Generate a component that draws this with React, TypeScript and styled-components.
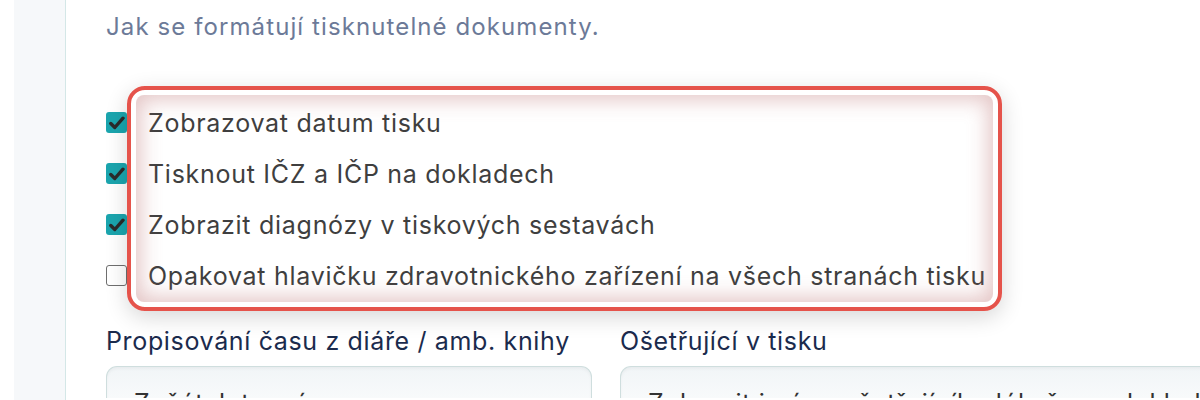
import React from "react";
import styled, { createGlobalStyle } from "styled-components";

const Global = createGlobalStyle`
  html, body { margin: 0; padding: 0; background: #ffffff; overflow: hidden; }
  body { font-family: "Inter", "Liberation Sans", sans-serif; }
  * { box-sizing: border-box; }
`;

const Page = styled.div`
  display: flex;
  width: 1200px;
  height: 400px;
  overflow: hidden;
  background: #ffffff;
`;

const Gutter = styled.div`
  width: 14px;
  flex: none;
  background: #ffffff;
`;

const Sidebar = styled.div`
  width: 52px;
  flex: none;
  background: #f6f8fa;
  border-right: 1px solid #d4e7e7;
`;

const Content = styled.div`
  flex: 1;
  padding: 10px 0 0 40px;
  min-width: 0;
`;

const Description = styled.p`
  margin: 0;
  font-size: 24px;
  line-height: 34px;
  color: #6c7a98;
  letter-spacing: 1.1px;
`;

const ListWrap = styled.div`
  position: relative;
  margin-top: 53px;
  width: 896px;
`;

const Row = styled.label`
  display: flex;
  align-items: center;
  gap: 21px;
  height: 51px;
`;

const Box = styled.span<{ $checked: boolean }>`
  width: 21px;
  height: 21px;
  flex: none;
  border-radius: 3px;
  display: flex;
  align-items: center;
  justify-content: center;
  background: ${(p) => (p.$checked ? "#1ba5ae" : "#ffffff")};
  border: ${(p) => (p.$checked ? "none" : "1.5px solid #6f6f6f")};
`;

const Label = styled.span`
  font-size: 25px;
  letter-spacing: 0.72px;
  color: #3f3f3f;
  white-space: nowrap;
`;

const Highlight = styled.div`
  position: absolute;
  left: 21px;
  top: -11px;
  width: 875px;
  height: 225px;
  border: 4px solid #e5534b;
  border-radius: 18px;
  padding: 5px;
  pointer-events: none;
  box-shadow: 0 6px 22px rgba(0, 0, 0, 0.16);
`;

const HighlightInner = styled.div`
  width: 100%;
  height: 100%;
  border-radius: 8px;
  box-shadow: inset 0 0 20px 5px rgba(190, 120, 120, 0.42);
`;

const Fields = styled.div`
  display: grid;
  grid-template-columns: 486px 620px;
  column-gap: 28px;
  margin-top: 24px;
`;

const Field = styled.div`
  display: flex;
  flex-direction: column;
`;

const FieldLabel = styled.div`
  font-size: 25px;
  letter-spacing: 0.65px;
  line-height: 32px;
  color: #1b2b4d;
  white-space: nowrap;
`;

const Select = styled.div`
  margin-top: 9px;
  height: 32px;
  border: 1px solid #cfdede;
  border-bottom: none;
  border-radius: 11px 11px 0 0;
  background: linear-gradient(#f1f5f7, #f8fafb);
  box-shadow: inset 0 2px 3px rgba(0, 0, 0, 0.04);
  padding: 0 0 0 27px;
  white-space: nowrap;
  overflow: hidden;
`;

const SelectText = styled.div`
  margin-top: 21px;
  font-size: 25px;
  line-height: 30px;
  letter-spacing: 0.7px;
  color: #333333;
`;

const Check = () => (
  <svg width="16" height="14" viewBox="0 0 16 14">
    <path
      d="M1.8 7.5 L5.8 11.5 L14 2.2"
      fill="none"
      stroke="#2b2b2b"
      strokeWidth="3.4"
      strokeLinecap="round"
      strokeLinejoin="round"
    />
  </svg>
);

const items = [
  { text: "Zobrazovat datum tisku", checked: true },
  { text: "Tisknout IČZ a IČP na dokladech", checked: true },
  { text: "Zobrazit diagnózy v tiskových sestavách", checked: true },
  { text: "Opakovat hlavičku zdravotnického zařízení na všech stranách tisku", checked: false },
];

export default function App() {
  return (
    <>
      <Global />
      <Page>
        <Gutter />
        <Sidebar />
        <Content>
          <Description>Jak se formátují tisknutelné dokumenty.</Description>
          <ListWrap>
            {items.map((it) => (
              <Row key={it.text}>
                <Box $checked={it.checked}>{it.checked && <Check />}</Box>
                <Label>{it.text}</Label>
              </Row>
            ))}
            <Highlight>
              <HighlightInner />
            </Highlight>
          </ListWrap>
          <Fields>
            <Field>
              <FieldLabel>Propisování času z diáře / amb. knihy</FieldLabel>
              <Select>
                <SelectText>Začátek termínu</SelectText>
              </Select>
            </Field>
            <Field>
              <FieldLabel>Ošetřující v tisku</FieldLabel>
              <Select>
                <SelectText>Zobrazit jméno ošetřujícího lékaře na dokladech</SelectText>
              </Select>
            </Field>
          </Fields>
        </Content>
      </Page>
    </>
  );
}
